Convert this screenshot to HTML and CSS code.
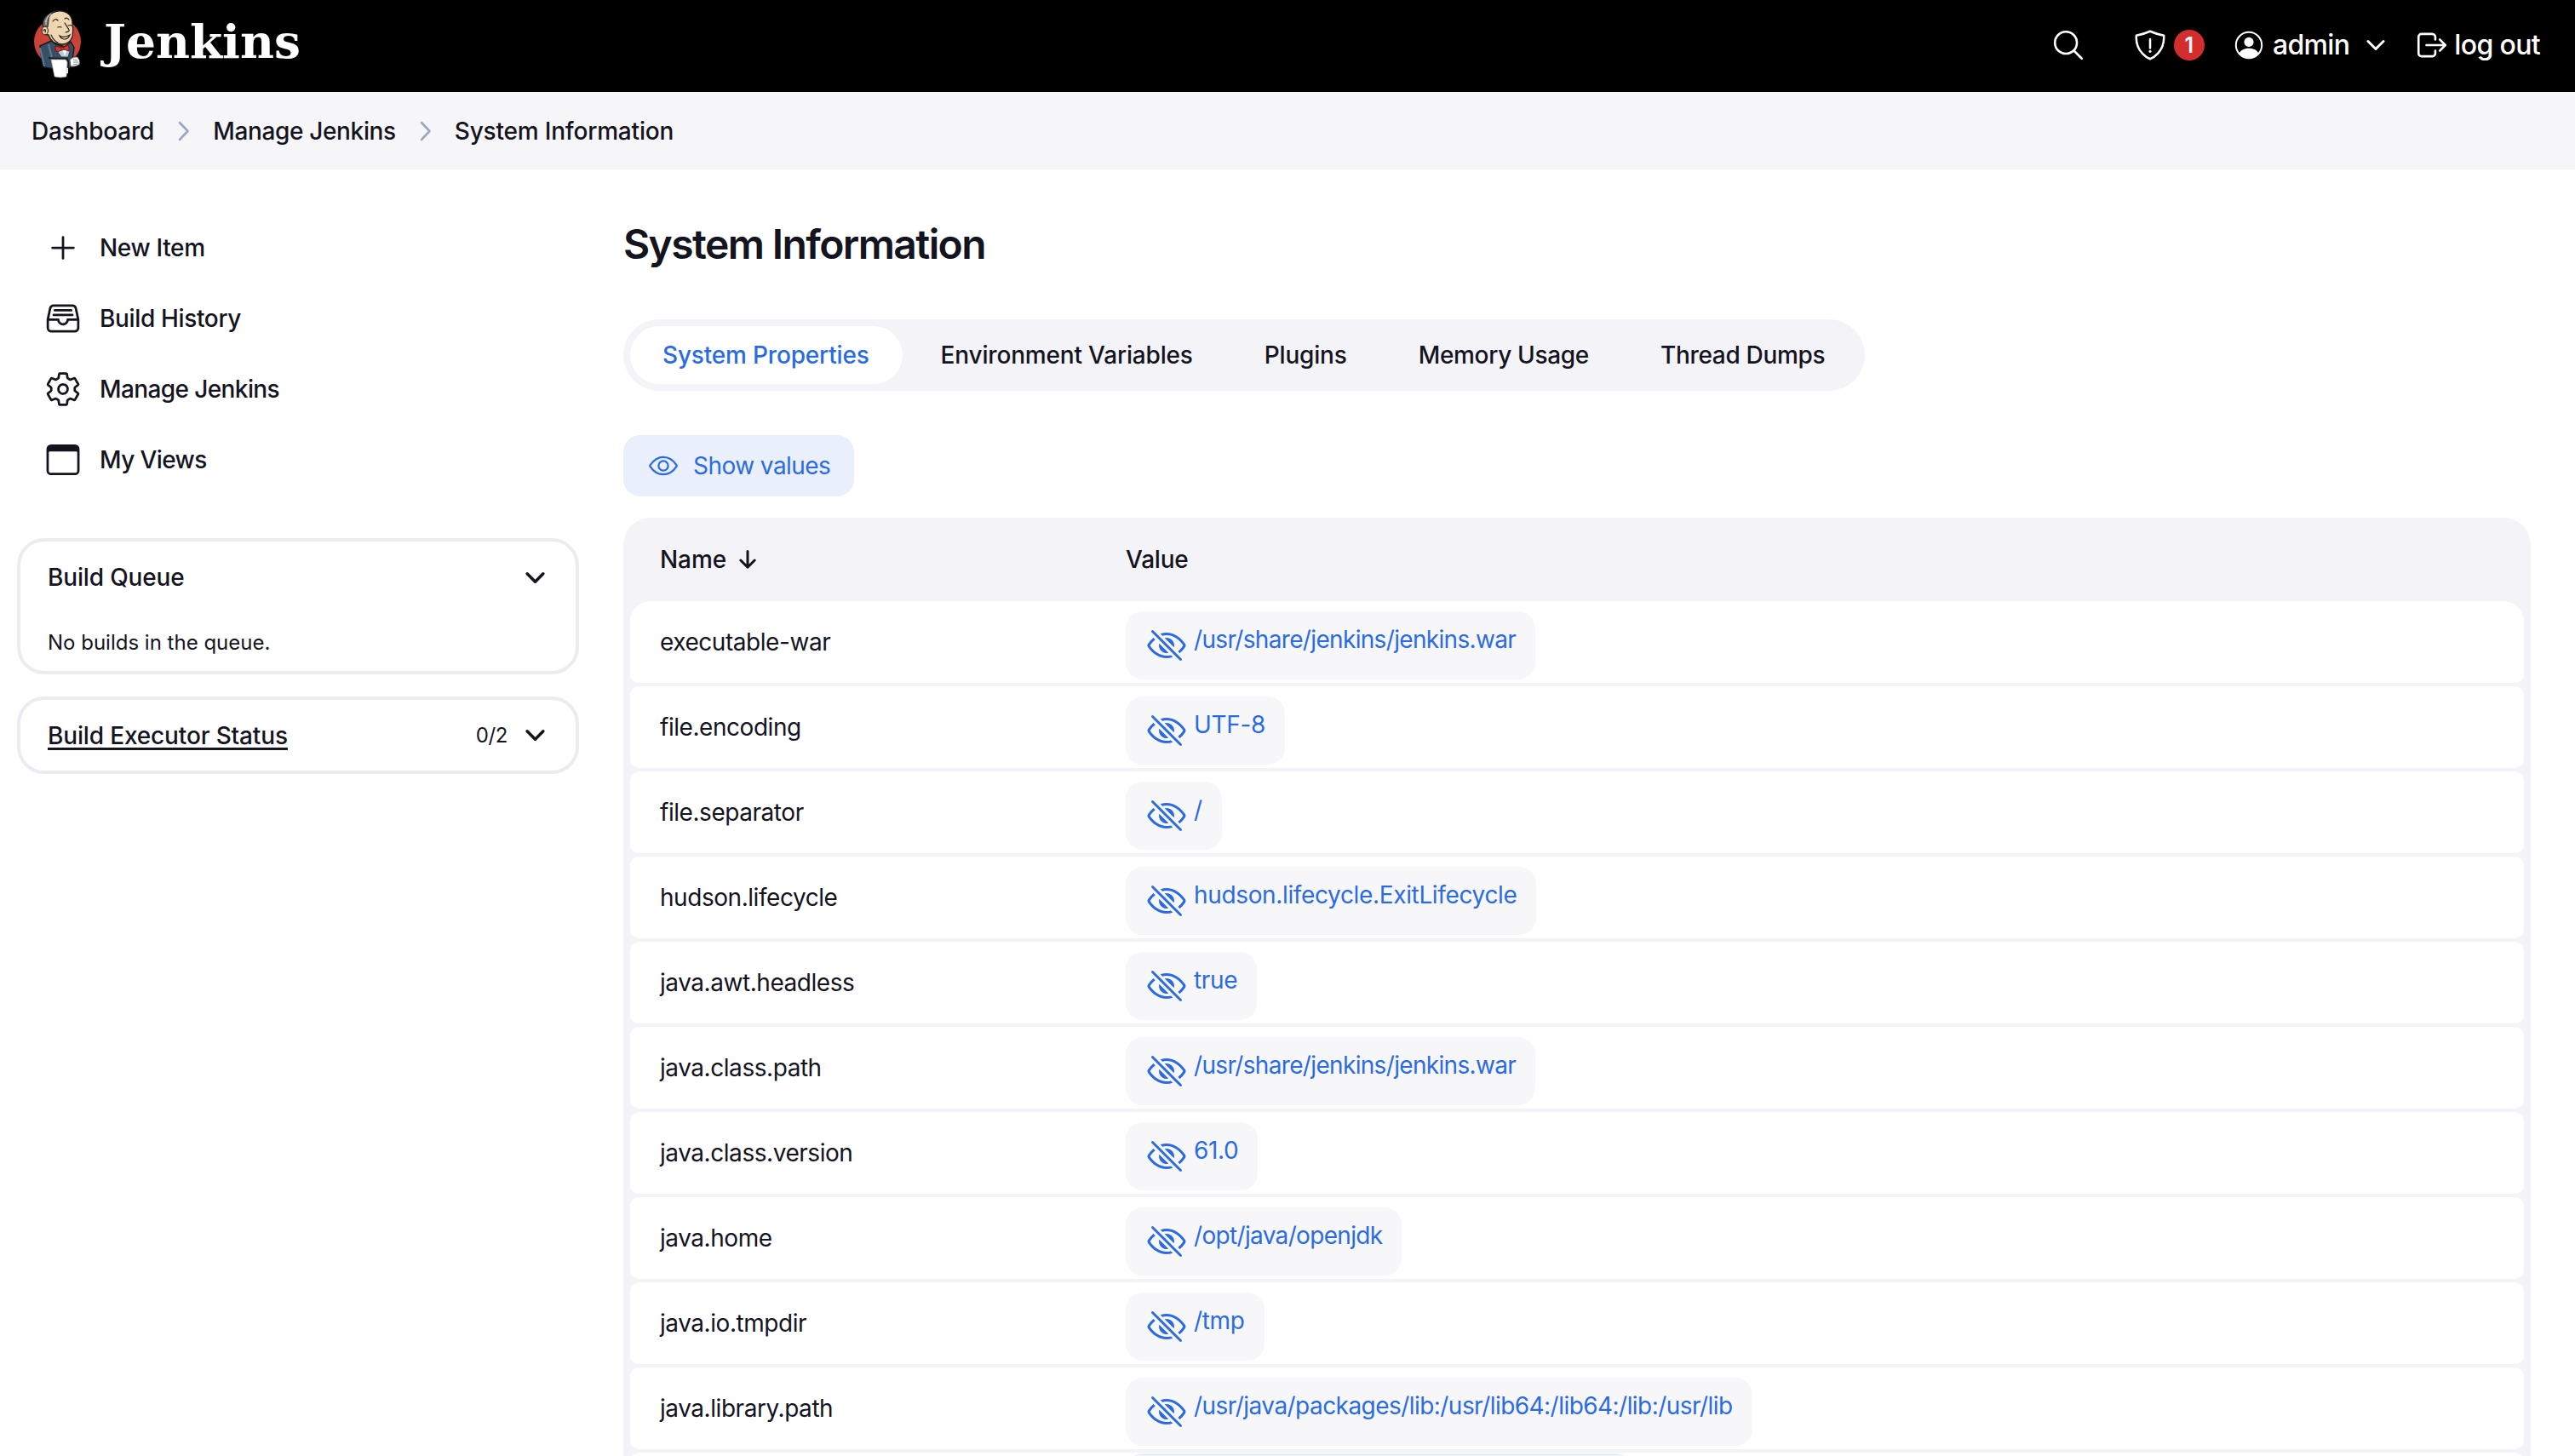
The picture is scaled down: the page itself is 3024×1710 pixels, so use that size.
FILE: index.html
```
<!DOCTYPE html>
<html lang="en">
<head>
<meta charset="utf-8">
<title>System Information [Jenkins]</title>
<link rel="stylesheet" href="styles.css">
</head>
<body>
<svg class="sprite" aria-hidden="true">
  <symbol id="eye-off" viewBox="0 0 512 512">
    <path d="M432 448a15.92 15.92 0 01-11.31-4.69l-352-352a16 16 0 0122.62-22.62l352 352A16 16 0 01432 448zM255.66 384c-41.49 0-81.5-12.28-118.92-36.5-34.07-22-64.74-53.51-88.7-91v-.08c19.94-28.57 41.78-52.73 65.24-72.21a2 2 0 00.14-2.94L93.5 161.38a2 2 0 00-2.71-.12c-24.92 21-48.05 46.76-69.08 76.92a31.92 31.92 0 00-.64 35.54c26.41 41.33 60.4 76.14 98.28 100.65C162 402 207.9 416 255.66 416a239.13 239.13 0 0075.8-12.58 2 2 0 00.77-3.31l-21.58-21.58a4 4 0 00-3.83-1 204.8 204.8 0 01-51.16 6.47zM490.84 238.6c-26.46-40.92-60.79-75.68-99.27-100.53C349 110.55 302 96 255.66 96a227.34 227.34 0 00-74.89 12.83 2 2 0 00-.75 3.31l21.55 21.55a4 4 0 003.88 1 192.82 192.82 0 0150.21-6.69c40.69 0 80.58 12.43 118.55 37 34.71 22.4 65.74 53.88 89.76 91a.13.13 0 010 .16 310.72 310.72 0 01-64.12 72.73 2 2 0 00-.15 2.95l19.9 19.89a2 2 0 002.7.13 343.49 343.49 0 0068.64-78.48 32.2 32.2 0 00-.1-34.78z"/>
    <path d="M256 160a95.88 95.88 0 00-21.37 2.4 2 2 0 00-1 3.38l112.59 112.56a2 2 0 003.38-1A96 96 0 00256 160zM165.78 233.66a2 2 0 00-3.38 1 96 96 0 00115 115 2 2 0 001-3.38z"/>
  </symbol>
  <symbol id="chevron" viewBox="0 0 24 24">
    <path d="M3 7.5l9 9 9-9"/>
  </symbol>
</svg>

<header class="header">
  <a class="brand">
    <svg class="butler" viewBox="38 10 60 84">
      <circle cx="67.5" cy="49" r="27.5" fill="#cb4238"/>
      <path d="M47 54L60 48L66 52L76 55L83 49L87 56L84 78L76 83L52 79L49 70z" fill="#364f63" stroke="#14181c" stroke-width="1.4"/>
      <path d="M47 56l5 22M57 52l4 16" stroke="#577a92" stroke-width="2.2" fill="none"/>
      <path d="M51 34c-3-11 5-20 17-21c11-1 17 6 17 14c1 5 1 10 0 16c-2 5-6 9-12 9c-8 0-14-4-16-11c-4 0-7-3-6-7z" fill="#efd5b0" stroke="#231f20" stroke-width="1.3"/>
      <path d="M68 13c-9 2-11 7-11 11l-1 8l-5 1c-3-9 4-19 17-20z" fill="#6f6d6e" stroke="#231f20"/>
      <path d="M60 16c-4 3-6 8-6 13M57 18l-4 8" stroke="#b8b6b7" fill="none" stroke-width="1.2"/>
      <ellipse cx="52.8" cy="36" rx="3.7" ry="4.8" fill="#efd5b0" stroke="#231f20"/>
      <path d="M51 36c2-3 3-1 2 2M62 25q3-4 6-1M76 22q3-2 5 1M68 32q2-1 4 0M80 30q3-1 4 0M76 27l5 8q1 2-4 3M70 42q5 3 12-1q-2 5-6 5q-4 0-6-4zM60 41q3 7 8 9" fill="none" stroke="#231f20" stroke-width="1.2" stroke-linecap="round"/>
      <path d="M67 60l6-4h5l4 4l-2 7h-8z" fill="#b5cbdc" stroke="#231f20" stroke-width=".8"/>
      <path d="M73 58l3 8l3-8z" fill="#f7f7f7"/>
      <path d="M65 54l8 2l7-3q2 3 1 7l-6-2l-8 3q-3-3-2-7z" fill="#d33833" stroke="#5a1513" stroke-width=".9"/>
      <circle cx="73.5" cy="57" r="1.8" fill="#d33833" stroke="#5a1513" stroke-width=".7"/>
      <path d="M57 68l22 1q3 6 0 12" fill="none" stroke="#14181c" stroke-width="1.6"/>
      <path d="M60 70h17l2 3l-1 17q-7 2-14 0z" fill="#fff" stroke="#999" stroke-width=".6"/>
      <path d="M77 79l3 1v6l-3 1z" fill="#e6e6e6"/>
      <path d="M82 70q4-4 9-3q4 4 2 9q-5 3-10 2z" fill="#fff" stroke="#444" stroke-width=".8"/>
      <path d="M86 70l5 1M86 73l6 0M86 76l5-1" stroke="#555" stroke-width=".7"/>
    </svg>
    <span class="brand-name">Jenkins</span>
  </a>
  <div class="header-actions">
    <svg class="icon search" viewBox="0 0 512 512"><path d="M221.09 64a157.09 157.09 0 10157.09 157.09A157.1 157.1 0 00221.09 64zM338.29 338.29L448 448"/></svg>
    <a class="alerts">
      <svg class="icon shield" viewBox="0 0 512 512"><path d="M463.1 112.37C373.68 96.33 336.71 84.45 256 48c-80.71 36.45-117.68 48.33-207.1 64.37C32.7 369.13 240.58 457.79 256 464c15.42-6.21 223.3-94.87 207.1-351.63zM256 166v134"/><circle class="solid" cx="256" cy="350" r="20"/></svg>
      <span class="badge">1</span>
    </a>
    <a class="user">
      <svg class="user-icon" viewBox="0 0 34 34"><circle cx="17" cy="17" r="15.2" fill="none" stroke="#fff" stroke-width="2"/><circle cx="17" cy="13.4" r="5.6" fill="#fff"/><path d="M5.6 26.4C8 22.200 12.500 20.800 17 20.800s9 1.400 11.400 5.600A15.200 15.200 0 0 1 5.600 26.400z" fill="#fff"/></svg>
      <span class="header-text">admin</span>
      <svg class="stroke-icon user-chevron"><use href="#chevron"/></svg>
    </a>
    <a class="logout">
      <svg class="icon logout-icon" viewBox="0 0 512 512"><path d="M304 336v40a40 40 0 01-40 40H104a40 40 0 01-40-40V136a40 40 0 0140-40h152c22.090 0 48 17.910 48 40v40M368 336l80-80-80-80M176 256h256"/></svg>
      <span class="header-text">log out</span>
    </a>
  </div>
</header>

<nav class="breadcrumbs">
  <a>Dashboard</a>
  <svg class="crumb-arrow" viewBox="0 0 14 24"><path d="M2 2l9.500 10L2 22"/></svg>
  <a class="crumb-manage">Manage Jenkins</a>
  <svg class="crumb-arrow" viewBox="0 0 14 24"><path d="M2 2l9.500 10L2 22"/></svg>
  <a>System Information</a>
</nav>

<div class="page">
  <aside class="side">
    <nav class="tasks">
      <a class="task"><svg class="icon" viewBox="0 0 512 512"><path d="M256 112v288M400 256H112"/></svg><span>New Item</span></a>
      <a class="task"><svg class="icon" viewBox="0 0 512 512"><path d="M384 80H128c-26 0-43 14-48 40L48 272v112a48.140 48.140 0 0048 48h320a48.140 48.140 0 0048-48V272l-32-152c-5-27-23-40-48-40zM48 272h144M320 272h144M192 272a64 64 0 00128 0M144 144h224M128 208h256"/></svg><span>Build History</span></a>
      <a class="task narrow"><svg class="icon" viewBox="0 0 512 512"><path d="M262.290 192.310a64 64 0 1057.400 57.400 64.130 64.130 0 00-57.400-57.400zM416.390 256a154.340 154.340 0 01-1.530 20.790l45.210 35.460a10.810 10.810 0 012.450 13.750l-42.770 74a10.810 10.810 0 01-13.140 4.590l-44.900-18.080a16.110 16.110 0 00-15.170 1.750A164.480 164.480 0 01325 400.800a15.940 15.940 0 00-8.820 12.140l-6.730 47.890a11.080 11.080 0 01-10.680 9.170h-85.540a11.110 11.110 0 01-10.690-8.870l-6.720-47.820a16.070 16.070 0 00-9-12.220 155.300 155.300 0 01-21.460-12.570 16 16 0 00-15.110-1.710l-44.890 18.070a10.810 10.810 0 01-13.140-4.580l-42.770-74a10.800 10.800 0 012.450-13.750l38.210-30a16.050 16.050 0 006-14.080c-.360-4.170-.580-8.330-.580-12.500s.210-8.270.580-12.350a16 16 0 00-6.070-13.940l-38.190-30A10.810 10.810 0 0149.480 186l42.770-74a10.810 10.810 0 0113.140-4.590l44.900 18.080a16.110 16.110 0 0015.170-1.750A164.480 164.480 0 01187 111.200a15.940 15.940 0 008.820-12.140l6.730-47.890A11.080 11.080 0 01213.230 42h85.540a11.110 11.110 0 0110.690 8.870l6.720 47.820a16.070 16.070 0 009 12.220 155.300 155.300 0 0121.460 12.570 16 16 0 0015.110 1.710l44.890-18.070a10.810 10.810 0 0113.140 4.580l42.770 74a10.800 10.800 0 01-2.450 13.750l-38.210 30a16.050 16.050 0 00-6.050 14.080c.330 4.140.550 8.300.550 12.470z"/></svg><span>Manage Jenkins</span></a>
      <a class="task narrow"><svg class="icon" viewBox="0 0 512 512"><rect x="46" y="62" width="420" height="388" rx="46"/><path class="solid" d="M46 172V108a46 46 0 0146-46h328a46 46 0 0146 46v64q0-30-34-30H80q-34 0-34 30z"/></svg><span>My Views</span></a>
    </nav>

    <section class="pane queue">
      <div class="pane-head"><span class="pane-title">Build Queue</span><svg class="stroke-icon pane-chevron"><use href="#chevron"/></svg></div>
      <p class="pane-text">No builds in the queue.</p>
    </section>
    <section class="pane">
      <div class="pane-head"><a class="pane-title link">Build Executor Status</a><span class="count">0/2</span><svg class="stroke-icon pane-chevron"><use href="#chevron"/></svg></div>
    </section>
  </aside>

  <main class="main">
    <h1>System Information</h1>
    <div class="tabs">
      <a class="tab active">System Properties</a>
      <a class="tab">Environment Variables</a>
      <a class="tab">Plugins</a>
      <a class="tab tight">Memory Usage</a>
      <a class="tab tight">Thread Dumps</a>
    </div>
    <button class="show-values">
      <svg class="icon" viewBox="0 0 512 512"><path d="M255.660 112c-77.940 0-157.890 45.110-220.830 135.330a16 16 0 00-.270 17.770C82.920 340.800 161.800 400 255.660 400c92.840 0 173.340-59.380 221.790-135.250a16.140 16.140 0 000-17.470C428.890 172.280 347.800 112 255.660 112z"/><circle cx="256" cy="256" r="80"/></svg>
      <span>Show values</span>
    </button>

    <div class="table">
      <div class="table-head">
        <div class="cell-name">Name<svg class="sort" viewBox="0 0 20 22"><path d="M10 1.500v18.500M1.800 12l8.200 8.200 8.200-8.200"/></svg></div>
        <div>Value</div>
      </div>
      <div class="row"><div class="cell-name">executable-war</div><a class="chip"><svg><use href="#eye-off"/></svg><span class="path">/usr/share/jenkins/jenkins.war</span></a></div>
      <div class="row"><div class="cell-name">file.encoding</div><a class="chip"><svg><use href="#eye-off"/></svg><span>UTF-8</span></a></div>
      <div class="row"><div class="cell-name">file.separator</div><a class="chip"><svg><use href="#eye-off"/></svg><span>/</span></a></div>
      <div class="row"><div class="cell-name">hudson.lifecycle</div><a class="chip"><svg><use href="#eye-off"/></svg><span>hudson.lifecycle.ExitLifecycle</span></a></div>
      <div class="row"><div class="cell-name">java.awt.headless</div><a class="chip"><svg><use href="#eye-off"/></svg><span>true</span></a></div>
      <div class="row"><div class="cell-name">java.class.path</div><a class="chip"><svg><use href="#eye-off"/></svg><span class="path">/usr/share/jenkins/jenkins.war</span></a></div>
      <div class="row"><div class="cell-name">java.class.version</div><a class="chip"><svg><use href="#eye-off"/></svg><span>61.0</span></a></div>
      <div class="row"><div class="cell-name">java.home</div><a class="chip"><svg><use href="#eye-off"/></svg><span class="path">/opt/java/openjdk</span></a></div>
      <div class="row"><div class="cell-name">java.io.tmpdir</div><a class="chip"><svg><use href="#eye-off"/></svg><span>/tmp</span></a></div>
      <div class="row"><div class="cell-name">java.library.path</div><a class="chip"><svg><use href="#eye-off"/></svg><span class="path-list">/usr/java/packages/lib:/usr/lib64:/lib64:/lib:/usr/lib</span></a></div>
      <div class="row"><div class="cell-name"></div><a class="chip hovered"></a></div>
    </div>
  </main>
</div>
</body>
</html>
```
FILE: styles.css
```
* { box-sizing: border-box; }

body {
  display: flex;
  flex-direction: column;
  margin: 0;
  height: 1710px;
  overflow: hidden;
  background: #fff;
  color: #14141f;
  font: 400 28px/40px Inter, "Liberation Sans", sans-serif;
  letter-spacing: -0.4px;
}

.sprite { display: none; }

.icon { flex: none; width: 44px; height: 44px; fill: none; stroke: currentColor; stroke-width: 32; stroke-linecap: round; stroke-linejoin: round; }
.icon .solid { fill: currentColor; stroke: none; }
.stroke-icon { flex: none; fill: none; stroke: currentColor; stroke-width: 3; stroke-linecap: round; stroke-linejoin: round; }

/* Header */
.header { display: flex; flex: none; align-items: center; justify-content: space-between; height: 108px; padding: 0 41px 0 38px; background: #000; color: #fff; }
.brand { display: flex; align-items: center; gap: 24px; }
.butler { width: 60px; height: 84px; margin-bottom: 4px; }
.brand-name { font: 700 55px/60px "DejaVu Serif", serif; letter-spacing: 0; padding-bottom: 10px; }
.header-actions { display: flex; align-items: center; padding-bottom: 3px; font-size: 32px; font-weight: 500; letter-spacing: -0.65px; }
.search { width: 42px; height: 42px; margin-right: 55px; }
.alerts { display: flex; align-items: center; gap: 8px; margin-right: 35px; }
.shield { width: 40px; height: 40px; }
.badge { width: 36px; height: 36px; border-radius: 50%; background: #d42d2e; font-size: 25px; font-weight: 600; line-height: 36px; text-align: center; letter-spacing: 0; }
.user { display: flex; align-items: center; margin-right: 33px; }
.user-icon { width: 34px; height: 34px; margin-right: 11px; }
.user-chevron { width: 24px; height: 24px; margin-left: 19px; }
.logout { display: flex; align-items: center; gap: 5px; }
.logout-icon { width: 42px; height: 42px; }

/* Breadcrumbs */
.breadcrumbs { display: flex; flex: none; align-items: center; height: 91px; padding-left: 37px; background: #f6f6f8; font-weight: 500; letter-spacing: -0.2px; }
.crumb-arrow { width: 14px; height: 24px; margin: 0 27px 0 28px; fill: none; stroke: #9ba7c2; stroke-width: 2.6; stroke-linecap: round; stroke-linejoin: round; }
.crumb-manage { letter-spacing: -0.35px; }

/* Page columns */
.page { display: flex; flex: 1; min-height: 0; overflow: hidden; }
.side { width: 732px; padding: 50px 52px 0 20px; }
.tasks { display: flex; flex-direction: column; padding-left: 32px; }
.task { display: flex; align-items: center; gap: 21px; height: 83px; font-weight: 450; letter-spacing: -0.35px; }
.task.narrow { letter-spacing: -0.6px; }

.pane { margin-top: 26px; padding: 0 32px; border: 4px solid #ebebf2; border-radius: 32px; }
.pane.queue { margin-top: 51px; }
.pane-head { display: flex; align-items: center; height: 83px; }
.queue .pane-head { height: 84px; }
.pane-title { margin-right: auto; font-weight: 500; letter-spacing: -0.15px; }
.link { text-decoration: underline; text-decoration-thickness: 2.5px; text-underline-offset: 4px; }
.count { margin-right: 20px; font-size: 24px; }
.pane-chevron { width: 25px; height: 25px; margin-right: 3px; stroke-width: 3.4; }
.pane-text { margin: 17px 0 15px; font-size: 24px; line-height: 36px; letter-spacing: 0; }

/* Main column */
.main { flex: 1; padding: 58px 52px 0 0; }
h1 { margin: 0 0 58px; font-size: 48px; font-weight: 600; line-height: 60px; letter-spacing: -1.6px; }

.tabs { display: flex; gap: 7px; width: max-content; height: 84px; padding: 8px; border-radius: 42px; background: #f3f3f8; }
.tab { display: flex; align-items: center; padding: 0 39px 0 38px; border-radius: 34px; font-weight: 500; letter-spacing: -0.18px; }
.tab.tight { letter-spacing: -0.32px; }
.tab.active { background: #fff; color: #2b6be2; }

.show-values { display: flex; align-items: center; gap: 17px; height: 72px; margin: 52px 0 25px; padding: 0 28px 0 29px; border: 0; border-radius: 20px; background: #e9effb; color: #2b6be2; font: inherit; letter-spacing: -0.55px; }
.show-values .icon { width: 36px; height: 36px; }

/* Properties table */
.table { display: flex; flex-direction: column; gap: 4px; padding: 0 8px; border-radius: 32px 32px 0 0; background: #f3f3f8; }
.table-head, .row { display: grid; grid-template-columns: 582px 1fr; align-items: center; }
.table-head { height: 94px; padding-top: 4px; font-weight: 500; letter-spacing: -0.2px; }
.row { height: 96px; border-radius: 10px; background: #fff; }
.table-head + .row { border-radius: 24px 24px 10px 10px; }
.cell-name { display: flex; align-items: center; padding-left: 35px; letter-spacing: -0.45px; }
.table-head .cell-name { letter-spacing: -0.1px; }
.sort { width: 20px; height: 22px; margin-left: 15px; fill: none; stroke: currentColor; stroke-width: 3; stroke-linecap: round; stroke-linejoin: round; }
.chip { display: flex; align-items: center; justify-self: start; gap: 8px; height: 80px; margin-top: 8px; padding: 0 23px 0 24px; border-radius: 20px; background: #f7f7fa; color: #2b6be2; letter-spacing: -0.35px; }
.chip svg { width: 48px; height: 48px; fill: currentColor; }
.chip span { padding-bottom: 14px; }
.chip .path { letter-spacing: -0.67px; }
.chip .path-list { letter-spacing: -0.55px; }
.chip.hovered { align-self: start; width: 595px; margin-top: 1px; background: #e9effb; }
```
